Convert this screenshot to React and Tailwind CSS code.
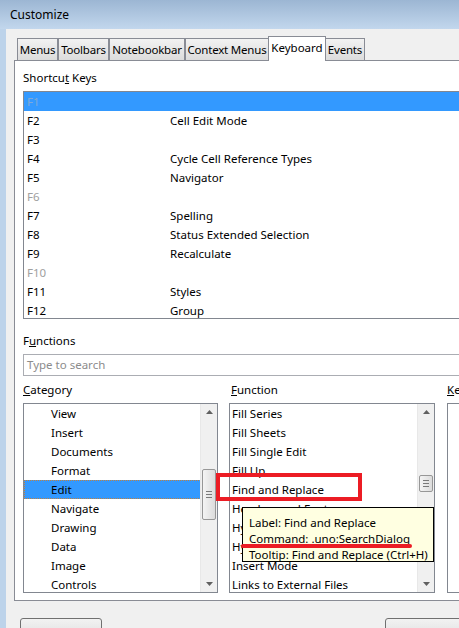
import React from 'react';

const font = { fontFamily: '"Noto Sans", "Open Sans", sans-serif' };

const shortcuts = [
  { key: 'F1', fn: '', off: true, sel: true },
  { key: 'F2', fn: 'Cell Edit Mode' },
  { key: 'F3', fn: '' },
  { key: 'F4', fn: 'Cycle Cell Reference Types' },
  { key: 'F5', fn: 'Navigator' },
  { key: 'F6', fn: '', off: true },
  { key: 'F7', fn: 'Spelling' },
  { key: 'F8', fn: 'Status Extended Selection' },
  { key: 'F9', fn: 'Recalculate' },
  { key: 'F10', fn: '', off: true },
  { key: 'F11', fn: 'Styles' },
  { key: 'F12', fn: 'Group' },
];

const categories = ['View', 'Insert', 'Documents', 'Format', 'Edit', 'Navigate', 'Drawing', 'Data', 'Image', 'Controls'];
const functions = ['Fill Series', 'Fill Sheets', 'Fill Single Edit', 'Fill Up', 'Find and Replace', 'Headers and Footers', 'Hyperlink', 'Hyphenation', 'Insert Mode', 'Links to External Files'];

const tabs = [
  { label: 'Menus', w: 'w-[41px]' },
  { label: 'Toolbars', w: 'w-[51px]' },
  { label: 'Notebookbar', w: 'w-[76px]' },
  { label: 'Context Menus', w: 'w-[84px]' },
  { label: 'Keyboard', w: 'w-[58px]', active: true },
  { label: 'Events', w: 'w-[40px]' },
];

function Arrow({ up }) {
  return (
    <svg width="7" height="4" viewBox="0 0 7 4" className="block">
      {up ? <path d="M0 4 L3.5 0 L7 4 Z" fill="#606060" /> : <path d="M0 0 L3.5 4 L7 0 Z" fill="#606060" />}
    </svg>
  );
}

function Scrollbar({ thumbTop, thumbH }) {
  return (
    <div className="absolute right-0 top-0 bottom-0 w-[17px] bg-[#f0f0f0] border-l border-[#e8e8e8]">
      <div className="absolute top-[6px] left-[5px]"><Arrow up /></div>
      <div className="absolute bottom-[6px] left-[5px]"><Arrow /></div>
      <div
        className="absolute left-[1px] w-[14px] rounded-[2px] border border-[#979797] bg-gradient-to-r from-[#f4f4f4] to-[#dcdcdc] flex flex-col items-center justify-center gap-[2px]"
        style={{ top: thumbTop, height: thumbH }}
      >
        <div className="w-[6px] h-px bg-[#7a7a7a]" />
        <div className="w-[6px] h-px bg-[#7a7a7a]" />
        <div className="w-[6px] h-px bg-[#7a7a7a]" />
      </div>
    </div>
  );
}

function Label({ children, className = '' }) {
  return <div className={`h-[16px] leading-[16px] text-black whitespace-nowrap ${className}`}>{children}</div>;
}

export default function App() {
  return (
    <div className="w-[459px] h-[628px] overflow-hidden bg-[#f0f0f0] text-[11.5px] text-black" style={font}>
      {/* title bar */}
      <div className="h-[29px] bg-gradient-to-b from-[#9cb6d3] to-[#c2d7ed] flex items-center pl-[10px]">
        <span className="text-[12px] text-black">Customize</span>
      </div>
      <div className="flex h-[599px]">
        <div className="w-[6px] shrink-0 bg-[#bdd3ea]" />
        <div className="flex-1 pl-[8px] relative">
          {/* tabs */}
          <div className="flex items-end h-[31px] pl-[3px] relative z-10">
            {tabs.map((t) =>
              t.active ? (
                <div key={t.label} className={`${t.w} h-[25px] -mb-[1px] -mx-px bg-white border border-b-0 border-[#898c95] flex items-start pt-[2px] justify-center leading-[18px] whitespace-nowrap relative z-10`}>
                  {t.label}
                </div>
              ) : (
                <div key={t.label} className={`${t.w} h-[22px] bg-gradient-to-b from-[#f2f2f2] to-[#dcdcdc] border border-b-0 border-[#898c95] flex items-center justify-center leading-[18px] whitespace-nowrap tracking-[-0.2px]`}>
                  {t.label}
                </div>
              )
            )}
          </div>
          {/* panel */}
          <div className="w-[520px] h-[541px] bg-white border border-[#898c95] pl-[8px]">
            <Label className="mt-[9px]">Shortcu<u>t</u> Keys</Label>
            <div className="mt-[5px] h-[228px] border border-[#828790] overflow-hidden">
              {shortcuts.map((s) => (
                <div key={s.key} className={`h-[19px] leading-[19px] flex ${s.sel ? 'bg-[#3399ff]' : ''}`}>
                  <span className={`w-[146px] pl-[3px] ${s.off ? (s.sel ? 'text-[#7fa9d6]' : 'text-[#a0a0a0]') : ''}`}>{s.key}</span>
                  <span>{s.fn}</span>
                </div>
              ))}
            </div>
            <Label className="mt-[14px]">F<u>u</u>nctions</Label>
            <div className="mt-[5px] h-[22px] border border-[#abadb3] leading-[20px] pl-[3px] text-[#8c8c8c]">Type to search</div>
            <div className="flex mt-[6px]">
              <Label className="w-[207px]"><u>C</u>ategory</Label>
              <Label className="w-[217px] pl-[1px]"><u>F</u>unction</Label>
              <Label><u>K</u>eys</Label>
            </div>
            <div className="flex mt-[5px]">
              <div className="relative w-[195px] h-[190px] border border-[#828790] overflow-hidden">
                {categories.map((c) => (
                  <div key={c} className={`h-[19px] leading-[19px] pl-[27px] ${c === 'Edit' ? 'bg-[#3399ff] outline outline-1 outline-dotted outline-[#c08040] -outline-offset-1' : ''}`}>{c}</div>
                ))}
                <Scrollbar thumbTop={65} thumbH={51} />
              </div>
              <div className="relative ml-[11px] w-[206px] h-[190px] border border-[#828790] overflow-hidden">
                {functions.map((f) => (
                  <div key={f} className="h-[19px] leading-[19px] pl-[2px] whitespace-nowrap">{f}</div>
                ))}
                <Scrollbar thumbTop={71} thumbH={17} />
              </div>
              <div className="ml-[12px] w-[80px] h-[190px] border border-[#828790]" />
            </div>
          </div>
          {/* buttons */}
          <div className="flex mt-[17px]">
            <div className="ml-[6px] w-[82px] h-[24px] rounded-[3px] border border-[#707070] bg-gradient-to-b from-[#f2f2f2] to-[#dddddd]" />
            <div className="ml-[283px] w-[82px] h-[24px] rounded-[3px] border border-[#707070] bg-gradient-to-b from-[#f2f2f2] to-[#dddddd]" />
          </div>
        </div>
      </div>

      {/* annotations */}
      <div className="absolute left-[216px] top-[473px] w-[146px] h-[28px] border-[4px] border-[#ec1c24] pointer-events-none" />
      <div className="absolute left-[242px] top-[507px] w-[192px] h-[55px] bg-[#ffffe1] border border-black pl-[6px] pt-[7px] leading-[16px] whitespace-nowrap">
        <div>Label: Find and Replace</div>
        <div>Command: .uno:SearchDialog</div>
        <div>Tooltip: Find and Replace (Ctrl+H)</div>
      </div>
      <div className="absolute left-[241px] top-[544px] w-[171px] h-[4px] bg-[#ec1c24] rounded-full" />
    </div>
  );
}
